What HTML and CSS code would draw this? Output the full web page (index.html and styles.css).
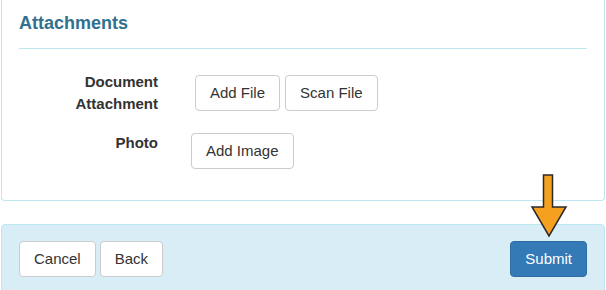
FILE: index.html
```html
<!DOCTYPE html>
<html lang="en">
<head>
<meta charset="utf-8">
<title>Attachments</title>
<link rel="stylesheet" href="styles.css">
</head>
<body>
<div class="page">
  <section class="panel">
    <h3 class="panel-title">Attachments</h3>
    <hr class="divider">
    <div class="form-row">
      <label class="form-label">Document Attachment</label>
      <div class="controls controls-first">
        <button class="btn" type="button">Add File</button>
        <button class="btn" type="button">Scan File</button>
      </div>
    </div>
    <div class="form-row form-row-second">
      <label class="form-label">Photo</label>
      <div class="controls controls-second">
        <button class="btn" type="button">Add Image</button>
      </div>
    </div>
  </section>
  <footer class="footer-bar">
    <div class="footer-left">
      <button class="btn" type="button">Cancel</button>
      <button class="btn" type="button">Back</button>
    </div>
    <button class="btn btn-primary" type="button">Submit</button>
  </footer>
  <svg class="pointer-arrow" width="40" height="66" viewBox="0 0 40 66" aria-hidden="true">
    <polygon points="13.5,2 22.5,2 22.5,34 36,34 19,63 2,34 13.5,34" fill="#f5a01e" stroke="#2a2a2a" stroke-width="1.5" stroke-linejoin="miter"/>
  </svg>
</div>
</body>
</html>
```
FILE: styles.css
```css
* {
  box-sizing: border-box;
}

html, body {
  margin: 0;
  padding: 0;
  background: #ffffff;
}

body {
  font-family: "Liberation Sans", Arial, Helvetica, sans-serif;
  font-size: 15px;
  line-height: 22px;
  color: #333333;
}

.page {
  position: relative;
  padding: 0 1px 0 1px;
}

.panel {
  border: 1px solid #bce8f1;
  border-top: 0;
  border-radius: 0 0 4px 4px;
  padding: 13px 17px 31px 17px;
  background: #ffffff;
}

.panel-title {
  margin: 0;
  font-size: 18px;
  line-height: 20px;
  font-weight: bold;
  color: #31708f;
}

.divider {
  margin: 15px 0 0 0;
  border: 0;
  border-top: 1px solid #bce8f1;
  height: 0;
}

.form-row {
  display: grid;
  grid-template-columns: 139px auto;
  align-items: start;
  margin-top: 22px;
}

.form-row-second {
  margin-top: 17px;
}

.form-label {
  text-align: right;
  font-weight: bold;
  line-height: 22px;
}

.controls {
  display: flex;
  gap: 5px;
}

.controls-first {
  margin: 4px 0 0 37px;
}

.controls-second {
  margin: 1px 0 0 33px;
}

.btn {
  font-family: inherit;
  font-size: 15px;
  line-height: 22px;
  padding: 6px 14px;
  height: 36px;
  border: 1px solid #cccccc;
  border-radius: 4px;
  background: #ffffff;
  color: #333333;
  cursor: pointer;
}

.btn-primary {
  background: #337ab7;
  border-color: #2e6da4;
  color: #ffffff;
}

.footer-bar {
  margin-top: 23px;
  display: flex;
  justify-content: space-between;
  align-items: center;
  background: #d9edf7;
  border: 1px solid #bce8f1;
  border-radius: 4px;
  padding: 16px 17px;
}

.footer-left {
  display: flex;
  gap: 4px;
}

.pointer-arrow {
  position: absolute;
  left: 530px;
  top: 173px;
}
```
